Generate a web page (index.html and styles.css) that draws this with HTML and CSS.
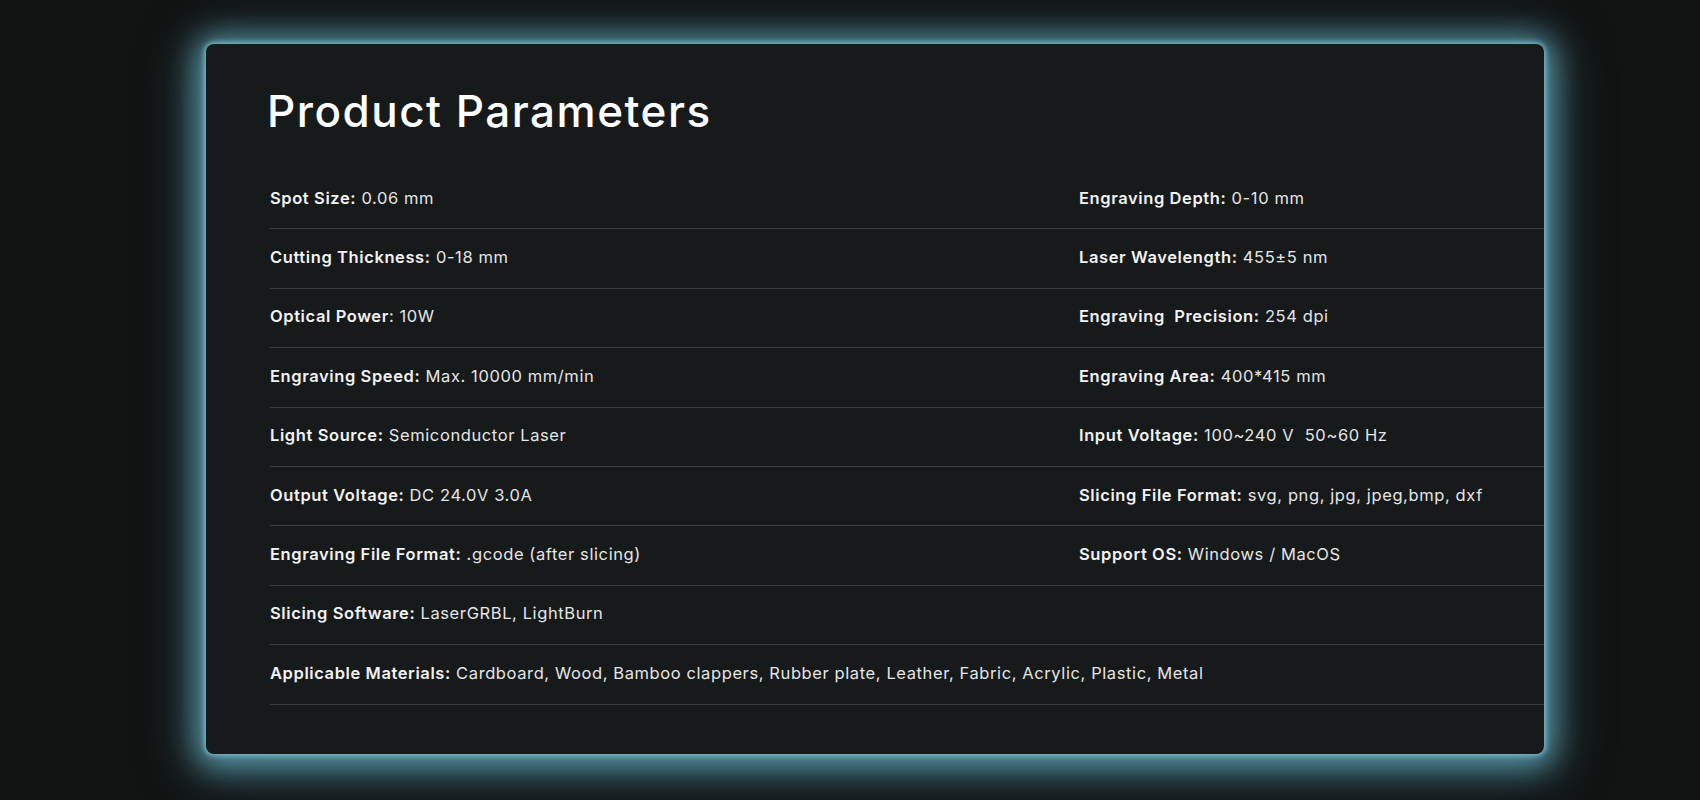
FILE: index.html
```html
<!DOCTYPE html>
<html lang="en">
<head>
<meta charset="utf-8">
<title>Product Parameters</title>
<link rel="stylesheet" href="styles.css">
</head>
<body>
<section class="card">
  <h1 class="title">Product Parameters</h1>
  <div class="specs">
    <div class="row">
      <div class="cell"><b>Spot Size:</b> 0.06 mm</div>
      <div class="cell"><b>Engraving Depth:</b> 0-10 mm</div>
    </div>
    <div class="row">
      <div class="cell"><b>Cutting Thickness:</b> 0-18 mm</div>
      <div class="cell"><b>Laser Wavelength:</b> 455±5 nm</div>
    </div>
    <div class="row">
      <div class="cell"><b>Optical Power</b>: 10W</div>
      <div class="cell"><b>Engraving&nbsp; Precision:</b> 254 dpi</div>
    </div>
    <div class="row">
      <div class="cell"><b>Engraving Speed:</b> Max. 10000 mm/min</div>
      <div class="cell"><b>Engraving Area:</b> 400*415 mm</div>
    </div>
    <div class="row">
      <div class="cell"><b>Light Source:</b> Semiconductor Laser</div>
      <div class="cell"><b>Input Voltage:</b> 100~240 V&nbsp; 50~60 Hz</div>
    </div>
    <div class="row">
      <div class="cell"><b>Output Voltage:</b> DC 24.0V 3.0A</div>
      <div class="cell"><b>Slicing File Format:</b> svg, png, jpg, jpeg,bmp, dxf</div>
    </div>
    <div class="row">
      <div class="cell"><b>Engraving File Format:</b> .gcode (after slicing)</div>
      <div class="cell"><b>Support OS:</b> Windows / MacOS</div>
    </div>
    <div class="row">
      <div class="cell"><b>Slicing Software:</b> LaserGRBL, LightBurn</div>
      <div class="cell"></div>
    </div>
    <div class="row">
      <div class="cell cell-wide"><b>Applicable Materials:</b> Cardboard, Wood, Bamboo clappers, Rubber plate, Leather, Fabric, Acrylic, Plastic, Metal</div>
    </div>
  </div>
</section>
</body>
</html>
```

FILE: styles.css
```css
html, body {
  margin: 0;
  padding: 0;
}

body {
  background: #121313;
  height: 800px;
  overflow: hidden;
  padding: 44px 156px 0 206px;
  box-sizing: border-box;
  font-family: "Inter", "DejaVu Sans", sans-serif;
  color: #e6e7e7;
}

.card {
  height: 710px;
  box-sizing: border-box;
  background: #171a1b;
  border-radius: 8px;
  overflow: hidden;
  padding: 41px 0 0 64px;
  box-shadow:
    0 0 5px 2px rgba(120, 190, 205, 0.9),
    0 3px 30px 10px rgba(100, 172, 190, 0.82),
    0 8px 56px 14px rgba(70, 140, 158, 0.4);
}

.title {
  margin: 0 0 33px -3px;
  font-size: 44px;
  line-height: 52px;
  font-weight: 550;
  color: #ffffff;
  letter-spacing: 1.5px;
}

.specs {
  display: flex;
  flex-direction: column;
}

.row {
  display: grid;
  grid-template-columns: 809px 1fr;
  height: 59.4px;
  box-sizing: border-box;
  border-bottom: 1px solid #3a3e40;
  align-items: center;
}

.cell {
  font-size: 16.5px;
  line-height: 20px;
  font-weight: 400;
  letter-spacing: 0.6px;
  color: #e4e5e5;
  white-space: nowrap;
  padding-bottom: 3px;
}

.cell b {
  font-weight: 600;
  color: #f2f2f2;
}

.cell-wide {
  grid-column: 1 / -1;
}
```
